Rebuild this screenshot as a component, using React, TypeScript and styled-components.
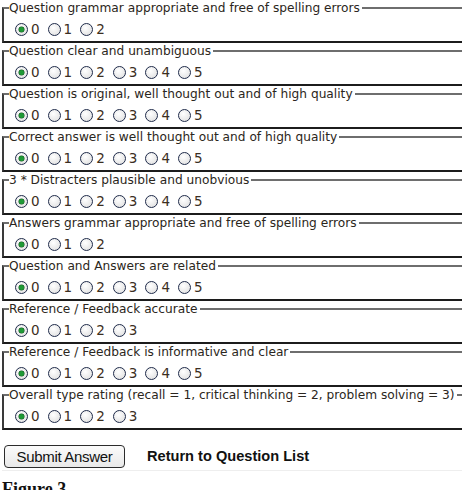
import React from "react"
import styled, { createGlobalStyle } from "styled-components"

const criteria: { label: string; max: number }[] = [
  { label: "Question grammar appropriate and free of spelling errors", max: 2 },
  { label: "Question clear and unambiguous", max: 5 },
  { label: "Question is original, well thought out and of high quality", max: 5 },
  { label: "Correct answer is well thought out and of high quality", max: 5 },
  { label: "3 * Distracters plausible and unobvious", max: 5 },
  { label: "Answers grammar appropriate and free of spelling errors", max: 2 },
  { label: "Question and Answers are related", max: 5 },
  { label: "Reference / Feedback accurate", max: 3 },
  { label: "Reference / Feedback is informative and clear", max: 5 },
  {
    label: "Overall type rating (recall = 1, critical thinking = 2, problem solving = 3)",
    max: 3,
  },
]

export default function App() {
  return (
    <>
      <GlobalStyle />
      <Page>
        <form onSubmit={(e) => e.preventDefault()}>
          {criteria.map((c, i) => (
            <Group key={i}>
              <Legend>{c.label}</Legend>
              <Options>
                {Array.from({ length: c.max + 1 }, (_, n) => (
                  <Option key={n}>
                    <Radio type="radio" name={`q${i}`} defaultChecked={n === 0} />
                    {n}
                  </Option>
                ))}
              </Options>
            </Group>
          ))}
          <Actions>
            <SubmitButton type="submit">Submit Answer</SubmitButton>
            <ReturnLink>Return to Question List</ReturnLink>
          </Actions>
        </form>
        <Caption>Figure 3</Caption>
      </Page>
    </>
  )
}

const GlobalStyle = createGlobalStyle`
  html, body {
    margin: 0;
    background: #ffffff;
    overflow: hidden;
  }
`
const Page = styled.div`
  padding-left: 2px;
  width: 480px;
  font-family: "DejaVu Sans", Verdana, sans-serif;
  color: #2b2620;
`
const Group = styled.fieldset`
  margin: 0;
  padding: 0 0 0 5px;
  min-inline-size: 0;
  border: none;
  border-left: 2px solid #3a3a3a;
  border-top: 2px solid #6e6e6e;
  border-bottom: 2px solid #1c1c1c;
`
const Legend = styled.legend`
  padding: 0 2px 0 0;
  font-size: 12.2px;
  line-height: 16px;
  white-space: nowrap;
`
const Options = styled.div`
  display: flex;
  align-items: center;
  height: 24px;
  padding: 1px 0 0 6px;
  gap: 8px;
`
const Option = styled.label`
  display: flex;
  align-items: center;
  gap: 3px;
  font-size: 13.5px;
  color: #3b2e22;
`
const Radio = styled.input`
  appearance: none;
  margin: 0;
  width: 13px;
  height: 13px;
  border-radius: 50%;
  border: 1.5px solid #1f2b4a;
  background: radial-gradient(circle at 40% 35%, #ffffff, #dcdcdc);
  display: grid;
  place-items: center;

  &:checked::after {
    content: "";
    width: 5px;
    height: 5px;
    border-radius: 50%;
    background: #1f9a36;
    box-shadow: 0 0 0 0.5px #14521f;
  }
`
const Actions = styled.div`
  display: flex;
  align-items: center;
  gap: 22px;
  padding: 14px 0 2px 2px;
  height: 24px;
  border-bottom: 1px solid #eeeeee;
`
const SubmitButton = styled.button`
  height: 23px;
  width: 121px;
  padding: 0;
  border: 1.5px solid #2c2c2c;
  border-radius: 4px;
  background: linear-gradient(#fbfbfb, #e9e9e9);
  font-family: "Liberation Sans", Arial, sans-serif;
  font-size: 15px;
  letter-spacing: -0.3px;
  color: #111111;
`
const ReturnLink = styled.a`
  font-family: "Liberation Sans", Arial, sans-serif;
  font-weight: bold;
  font-size: 14.6px;
  color: #111111;
`
const Caption = styled.div`
  margin-top: 8px;
  font-family: "Liberation Serif", "Times New Roman", serif;
  font-weight: bold;
  font-size: 18px;
  color: #111111;
`
